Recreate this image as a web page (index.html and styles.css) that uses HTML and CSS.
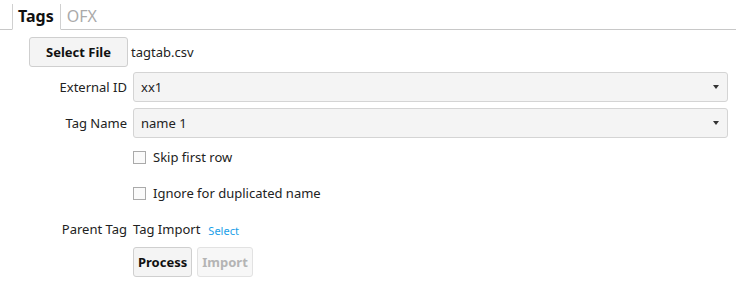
FILE: index.html
```html
<!DOCTYPE html>
<html>
<head>
	<title>Tag Import</title>
	<meta charset="utf-8">
	<link rel="stylesheet" href="styles.css">
</head>
<body>

	<div class="tabs">
		<div class="tab --active">Tags</div>
		<div class="tab">OFX</div>
		<div class="tabRest"></div>
	</div>

	<div class="form">

		<div class="row --file">
			<div class="label --wide"><button class="btn">Select File</button></div>
			<span class="value">tagtab.csv</span>
		</div>

		<div class="row">
			<div class="label">External ID</div>
			<div class="select">xx1<span class="caret"></span></div>
		</div>

		<div class="row">
			<div class="label">Tag Name</div>
			<div class="select">name 1<span class="caret"></span></div>
		</div>

		<div class="row --check">
			<div class="label"></div>
			<label class="check"><span class="box"></span>Skip first row</label>
		</div>

		<div class="row --check">
			<div class="label"></div>
			<label class="check"><span class="box"></span>Ignore for duplicated name</label>
		</div>

		<div class="row --parent">
			<div class="label">Parent Tag</div>
			<span class="value">Tag Import</span>
			<a class="link">Select</a>
		</div>

		<div class="row">
			<div class="label"></div>
			<button class="btn --small">Process</button>
			<button class="btn --small --disabled">Import</button>
		</div>

	</div>

</body>
</html>
```

FILE: styles.css
```css
/* * {border: 1px solid red;} */

body {
	margin: 0;
	font-family: "Noto Sans", sans-serif;
	font-size: 13px;
	color: #222;
	background: #fff;
}

.tabs {
	display: flex;
	height: 26px;
	margin: 4px 6px 0 0;
}
.tabs::before {
	content: "";
	width: 12px;
	border-bottom: 1px solid #c8c8c8;
}
.tab {
	padding: 0 6px 0 6px;
	font-size: 16px;
	line-height: 25px;
	color: #aaa;
	border-bottom: 1px solid #c8c8c8;
}
.tab.--active {
	padding-left: 5px;
	color: #111;
	font-weight: bold;
	border-left: 1px solid #d0d0d0;
	border-right: 1px solid #d0d0d0;
	border-bottom-color: transparent;
}
.tabRest {
	flex: 1;
	border-bottom: 1px solid #c8c8c8;
}

.form {
	padding: 7px 14px 0 29px;
}

.row {
	display: flex;
	align-items: center;
	margin-bottom: 6px;
}
.row.--file {
	margin-bottom: 5px;
}
.row.--check {
	height: 26px;
	margin-bottom: 10px;
}
.row.--parent {
	height: 26px;
	margin-bottom: 5px;
}

.label {
	width: 98px;
	padding-right: 6px;
	text-align: right;
	flex-shrink: 0;
}
.label.--wide {
	width: 100px;
	padding-right: 2px;
	text-align: left;
}

.btn {
	box-sizing: border-box;
	height: 30px;
	padding: 0 9px;
	font-family: inherit;
	font-size: 13px;
	font-weight: bold;
	color: #111;
	background: #f4f4f4;
	border: 1px solid #cfcfcf;
	border-radius: 3px;
	margin-right: 5px;
}
.btn.--small {
	padding: 0 4px;
}
.btn.--disabled {
	color: #b4b4b4;
	background: #f7f7f7;
	border-color: #e2e2e2;
}
.label .btn {
	width: 99px;
}

.select {
	flex: 1;
	position: relative;
	box-sizing: border-box;
	height: 30px;
	line-height: 28px;
	padding-left: 7px;
	background: #f4f4f4;
	border: 1px solid #d4d4d4;
	border-radius: 3px;
}
.caret {
	position: absolute;
	right: 8px;
	top: 12px;
	border-left: 3px solid transparent;
	border-right: 3px solid transparent;
	border-top: 4px solid #333;
}

.check {
	display: flex;
	align-items: center;
}
.box {
	width: 11px;
	height: 11px;
	border: 1px solid #aaa;
	margin-right: 7px;
	background: #fafafa;
}

.value {
	margin-right: 8px;
}
.link {
	color: #1aa0e8;
	font-size: 11px;
	margin-top: 2px;
}
```
